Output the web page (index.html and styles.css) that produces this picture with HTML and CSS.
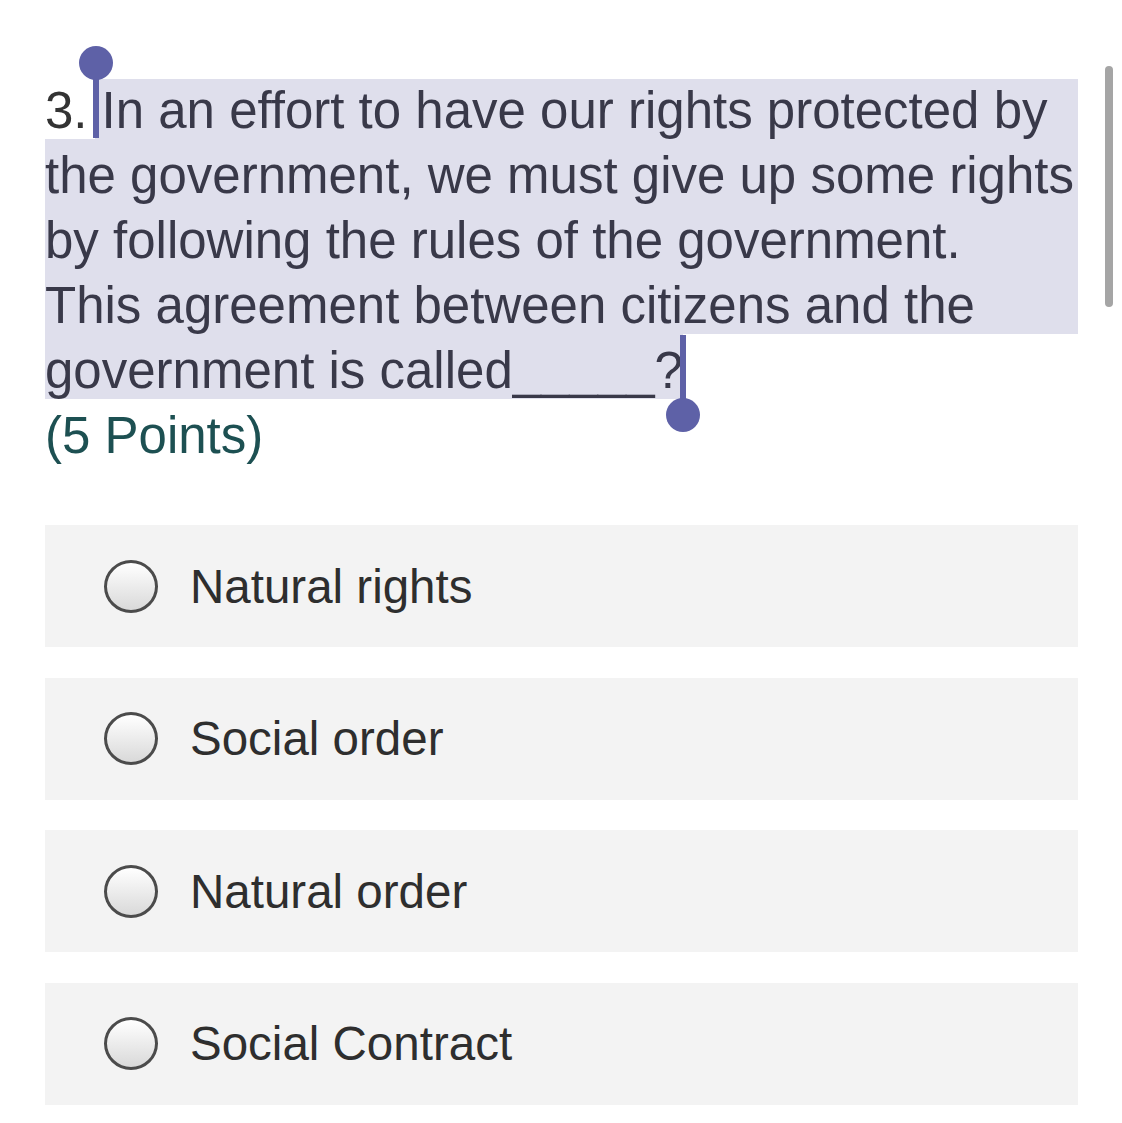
FILE: index.html
```html
<!DOCTYPE html>
<html>
  <head>
    <meta charset="utf-8">
    <title>Question 3</title>
    <link rel="stylesheet" href="styles.css">
  </head>
  <body>
    <div class="page">
      <div class="question">
        <div class="ln first"><span class="num">3.</span><span class="sel"><span class="handle start"></span>In an effort to have our rights protected by</span></div>
        <div class="ln sel">the government, we must give up some rights</div>
        <div class="ln sel">by following the rules of the government.</div>
        <div class="ln sel">This agreement between citizens and the</div>
        <div class="ln"><span class="sel last">government is called_____?<span class="handle end"></span></span></div>
        <div class="ln points">(5 Points)</div>
      </div>

      <ul class="choices">
        <li><span class="radio"></span>Natural rights</li>
        <li><span class="radio"></span>Social order</li>
        <li><span class="radio"></span>Natural order</li>
        <li><span class="radio"></span>Social Contract</li>
      </ul>
    </div>
    <div class="scrollbar"></div>
  </body>
</html>
```

FILE: styles.css
```css
  *{
    margin: 0;
    padding: 0;
    box-sizing: border-box;
  }
  body{
    background: #fff;
    font-family: "Liberation Sans", Arial, Helvetica, sans-serif;
    color: #333;
  }
  .page{
    width: 1033px;
    margin-left: 45px;
    padding-top: 74px;
  }

  /* question text with the selection */
  .question{
    font-size: 51px;
    line-height: 73px;
  }
  .ln{
    height: 65px;
    white-space: nowrap;
  }
  .sel{
    background: #dfdfec;
    color: #393949;
    position: relative;
  }
  .first{
    display: flex;
  }
  .first .num{
    margin-right: 7px;
  }
  .first .sel{
    flex: 1;
    padding-left: 7px;
    background: linear-gradient(transparent 5px, #dfdfec 5px);
  }
  .sel.last{
    display: inline-block;
    height: 65px;
    vertical-align: top;
  }
  .points{
    color: #1d5052;
  }

  /* selection handles */
  .handle{
    position: absolute;
    width: 6px;
    background: #5e61a7;
  }
  .handle::after{
    content: "";
    position: absolute;
    left: -14px;
    width: 34px;
    height: 34px;
    border-radius: 50%;
    background: #5e61a7;
  }
  .handle.start{
    left: -2px;
    top: -11px;
    height: 75px;
  }
  .handle.start::after{
    top: -17px;
  }
  .handle.end{
    right: -3px;
    top: 1px;
    height: 80px;
  }
  .handle.end::after{
    bottom: -17px;
  }

  /* answer choices */
  .choices{
    list-style: none;
    margin-top: 61px;
    display: flex;
    flex-direction: column;
    gap: 30.5px;
  }
  .choices li{
    height: 122px;
    background: #f3f3f3;
    display: flex;
    align-items: center;
    padding-left: 59px;
    font-size: 47.5px;
    color: #2e2e2e;
  }
  .radio{
    width: 54px;
    height: 53px;
    border: 3px solid #4b4b4b;
    border-radius: 50%;
    background: linear-gradient(#ffffff, #d9d9d9);
    margin-right: 32px;
    flex: none;
  }

  .scrollbar{
    position: fixed;
    top: 66px;
    left: 1105px;
    width: 8px;
    height: 241px;
    border-radius: 4px;
    background: #a5a5a5;
  }
```
